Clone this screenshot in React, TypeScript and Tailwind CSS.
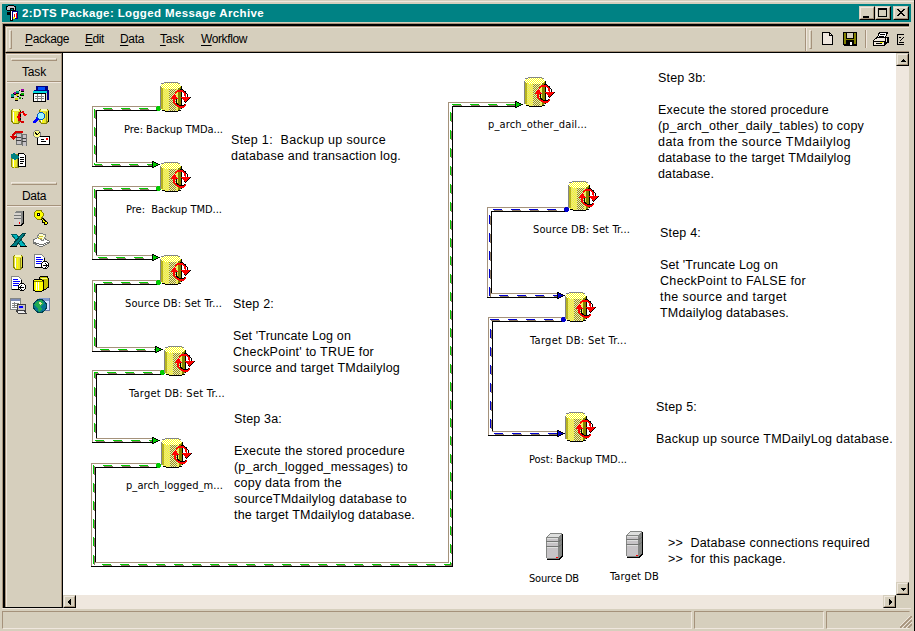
import { useLayoutEffect, useRef, type ReactNode } from "react";

const SHADOW = "#a5927b";

/** Single line of text whose tracking is adjusted to fill a given width. */
function Fit({ w, className = "", children }: { w: number; className?: string; children: ReactNode }) {
  const ref = useRef<HTMLSpanElement>(null);
  useLayoutEffect(() => {
    const el = ref.current;
    if (!el) return;
    el.style.letterSpacing = "0px";
    const natural = el.getBoundingClientRect().width;
    const n = (el.textContent ?? "").length;
    el.style.letterSpacing = `${(w - natural) / n}px`;
  }, [w]);
  return (
    <span ref={ref} className={`inline-block whitespace-pre ${className}`}>
      {children}
    </span>
  );
}

type Line = [string, number];
type Note = { x: number; y: number; lines: Line[] };

const notes: Note[] = [
  { x: 231, y: 139, lines: [["Step 1:  Backup up source", 155], ["database and transaction log.", 170]] },
  {
    x: 233, y: 303,
    lines: [["Step 2:", 41], ["", 0], ["Set 'Truncate Log on", 118], ["CheckPoint' to TRUE for", 141], ["source and target TMdailylog", 167]],
  },
  {
    x: 234, y: 418,
    lines: [["Step 3a:", 48], ["", 0], ["Execute the stored procedure", 171], ["(p_arch_logged_messages) to", 174], ["copy data from the", 108], ["sourceTMdailylog database to", 173], ["the target TMdailylog database.", 181]],
  },
  {
    x: 658, y: 77,
    lines: [["Step 3b:", 48], ["", 0], ["Execute the stored procedure", 171], ["(p_arch_other_daily_tables) to copy", 206], ["data from the source TMdailylog", 193], ["database to the target TMdailylog", 193], ["database.", 56]],
  },
  {
    x: 660, y: 232,
    lines: [["Step 4:", 41], ["", 0], ["Set 'Truncate Log on", 118], ["CheckPoint to FALSE for", 146], ["the source and target", 127], ["TMdailylog databases.", 129]],
  },
  { x: 656, y: 406, lines: [["Step 5:", 41], ["", 0], ["Backup up source TMDailyLog database.", 237]] },
  { x: 668, y: 542, lines: [[">>  Database connections required", 202], [">>  for this package.", 118]] },
];

const labels: [string, number, number, number][] = [
  ["Pre: Backup TMDa...", 124, 129, 99],
  ["Pre:  Backup TMD...", 126, 209, 96],
  ["Source DB: Set Tr...", 125, 303, 97],
  ["Target DB: Set Tr...", 129, 393, 96],
  ["p_arch_logged_m...", 126, 485, 97],
  ["p_arch_other_dail...", 488, 124, 99],
  ["Source DB: Set Tr...", 533, 229, 97],
  ["Target DB: Set Tr...", 530, 340, 97],
  ["Post: Backup TMD...", 529, 459, 98],
  ["Source DB", 529, 578, 50],
  ["Target DB", 610, 576, 49],
];

const cylinders: [number, number][] = [
  [160, 82], [160, 162], [160, 255], [164, 346], [161, 438], [524, 77], [568, 181], [565, 292], [565, 412],
];

function Cylinder({ x, y }: { x: number; y: number }) {
  return (
    <g transform={`translate(${x} ${y})`}>
      <path d="M1 4H21V27L17 29H5L1 27Z" fill="url(#body)" />
      <path d="M1 5H3V27H1Z" fill="#b5b221" />
      <path d="M9 6H16V29H9Z" fill="url(#mid)" />
      <path d="M18 5H21V27L18 28Z" fill="#848200" />
      <path d="M4 1H18L21 3V5L17 7H5L1 5V3Z" fill="url(#lid)" />
      <path d="M0 4H1V27H0ZM4 0H18V1H4ZM1 2H4V1H1ZM18 1H20V2H18Z" fill="#848684" />
      <path d="M21 4H22V27H21ZM5 29H18V30H5ZM2 28H5V29H2ZM18 28H21V29H18Z" fill="#000" />
      <g fill="none" stroke="#000">
        <path d="M14.5 12.5L17.5 8.5L22 7.5L25 9.5L27.5 13V15M16 17V20.5L19 23.5H23L26 22.5" />
      </g>
      <g fill="none" stroke="#ff0000" strokeWidth="1.6">
        <path d="M15 11.5L18 9H22L25 11.5L25.5 16M14 17V20L16.5 23.5L20 25H23L26 23" />
      </g>
      <path d="M20.5 15H30.5L25.5 20ZM10.5 17L14.5 12L18.5 17Z" fill="#ff0000" />
      <path d="M30.5 15.5L25.5 20.5L24 19" fill="none" stroke="#000" />
    </g>
  );
}

type Link = { x: number; y1: number; y2: number; start: number; end: number; color: string };

const links: Link[] = [
  { x: 92, y1: 108, y2: 164, start: 158, end: 160, color: "#00cb00" },
  { x: 92, y1: 188, y2: 257, start: 158, end: 160, color: "#00cb00" },
  { x: 92, y1: 282, y2: 349, start: 158, end: 163, color: "#00cb00" },
  { x: 92, y1: 372, y2: 440, start: 162, end: 160, color: "#00cb00" },
  { x: 487, y1: 209, y2: 295, start: 566, end: 565, color: "#0000ce" },
  { x: 488, y1: 319, y2: 433, start: 563, end: 565, color: "#0000ce" },
];

function Arrow({ x, y, color }: { x: number; y: number; color: string }) {
  return <path d={`M${x - 8} ${y - 3}L${x - 1} ${y + 0.5}L${x - 8} ${y + 4}Z`} fill={color} stroke="#000" />;
}

function Dashes({ d, color }: { d: string; color: string }) {
  return (
    <g strokeDasharray="9 9">
      <path d={d} stroke="#8c7963" transform="translate(1 1)" />
      <path d={d} stroke={color} />
    </g>
  );
}

function Elbow({ x, y1, y2, start, end, color }: Link) {
  return (
    <g fill="none">
      <path d={`M${start} ${y1 - 1.5}H${x + 0.5}V${y2 + 2}M${x + 4} ${y2 - 1.5}H${end - 8}`} stroke={SHADOW} />
      <path d={`M${start} ${y1 + 2.5}H${x + 4.5}V${y2 - 2}M${x} ${y2 + 2.5}H${end - 8}`} stroke="#000" />
      <Dashes d={`M${start - 10} ${y1 + 0.5}H${x + 2.5}V${y2 + 0.5}H${end - 7}`} color={color} />
      <path d={`M${start - 1} ${y1 - 2}h3v1h1v3h-1v1h-3v-1h-1v-3h1z`} fill={color} />
      <Arrow x={end} y={y2} color={color} />
    </g>
  );
}

function LongLink() {
  return (
    <g fill="none">
      <path d="M158 463.5H91.5V566M95 562.5H448.5V102.5H515" stroke={SHADOW} />
      <path d="M158 467.5H95.5V562M91 566.5H452.5V106.5H515" stroke="#000" />
      <Dashes d="M148 465.5H93.5V564.5H450.5V104.5H515" color="#00cb00" />
      <path d="M157 463h3v1h1v3h-1v1h-3v-1h-1v-3h1z" fill="#00cb00" />
      <Arrow x={523} y={104} color="#00cb00" />
    </g>
  );
}

function Server({ x, y }: { x: number; y: number }) {
  return (
    <g transform={`translate(${x} ${y})`}>
      <path d="M0 4L4 0H16V23L13 26H1L0 25Z" fill="#848684" />
      <path d="M1 4L4 1H15L13 4Z" fill="#dedfde" />
      <path d="M1 5H12V25H1Z" fill="#c6c3c6" />
      <path d="M1 5.5H12M1 9.5H12M1 14.5H12" stroke="#dedfde" />
      <path d="M0 8.5H13L16 6M0 13.5H13L16 11" stroke="#737573" fill="none" />
      <path d="M16.5 1V23L13 26.5H1" stroke="#000" fill="none" />
      <path d="M10 24h2v1h-2z" fill="#ff0000" />
    </g>
  );
}

function Diagram() {
  return (
    <svg className="absolute top-0 left-0" width="833" height="542" viewBox="63 53 833 542" shapeRendering="crispEdges">
      <defs>
        <pattern id="body" width="2" height="2" patternUnits="userSpaceOnUse">
          <path d="M0 0h2v2H0z" fill="#ffff21" />
          <path d="M0 0h1v1H0zM1 1h1v1H1z" fill="#dedb9c" />
        </pattern>
        <pattern id="mid" width="2" height="2" patternUnits="userSpaceOnUse">
          <path d="M0 0h2v2H0z" fill="#efebb5" />
          <path d="M0 0h1v1H0zM1 1h1v1H1z" fill="#949221" />
        </pattern>
        <pattern id="lid" width="2" height="2" patternUnits="userSpaceOnUse">
          <path d="M0 0h2v2H0z" fill="#fff" />
          <path d="M0 0h1v1H0zM1 1h1v1H1z" fill="#ffff18" />
        </pattern>
      </defs>
      {links.map((l) => <Elbow key={l.y1} {...l} />)}
      <LongLink />
      {cylinders.map(([x, y]) => <Cylinder key={`${x}-${y}`} x={x} y={y} />)}
      <Server x={546} y={533} />
      <Server x={626} y={531} />
    </svg>
  );
}

function Icon({ children }: { children: ReactNode }) {
  return (
    <svg width="17" height="16" viewBox="0 0 17 16" shapeRendering="crispEdges" className="block">
      {children}
    </svg>
  );
}

const drum = (
  <>
    <path d="M1.5 2.5L3 1H9L10.5 2.5V13L9 15H3L1.5 13Z" fill="#e7e331" stroke="#848200" />
    <path d="M3.5 4V14" stroke="#fff" />
    <path d="M5.5 4V15" stroke="#ffff00" />
    <path d="M8.5 4V15" stroke="#949221" />
    <path d="M10.5 3V14" stroke="#000" />
    <path d="M3 1H9V3H3Z" fill="#ffffb5" />
  </>
);
const sheet = (
  <>
    <path d="M1.5 0.5H8.5L11.5 3.5V13.5H1.5Z" fill="#fff" stroke="#848684" />
    <path d="M11.5 4V13.5H2" stroke="#000" fill="none" />
    <path d="M3 3.5H8M3 5.5H10M3 7.5H9M3 9.5H8" stroke="#0000ff" />
  </>
);

const taskIcons: ReactNode[] = [
  <>
    <path d="M1 9L5 7L8 11L12 8M6 7L11 3L14 5M10 11L14 13" stroke="#000" fill="none" strokeDasharray="1 1" />
    <path d="M1 8h3v3H1zM6 5h3v2H6z" fill="#009a84" />
    <path d="M4 6h2v2H4zM11 3h3v2h-3z" fill="#9c00a5" />
    <path d="M6 8h2v2H6zM5 12h3v2H5z" fill="#cece00" />
    <path d="M11 7h3v2h-3zM9 11h2v2H9z" fill="#00ad00" />
    <path d="M1 11h3v1H1zM6 7h3v1H6zM11 5h3v1h-3zM5 14h3v1H5zM11 9h3v1h-3zM4 8h2v1H4z" fill="#000" />
  </>,
  <>
    <path d="M3 0H15V4H16V14H14V6H1V4H3Z" fill="#000084" />
    <path d="M5 1H12V4H5Z" fill="#0051ff" />
    <path d="M0 5H14V7H0Z" fill="#00d7de" />
    <path d="M0.5 7.5H12.5V15.5H0.5Z" fill="#fff" stroke="#000" />
    <path d="M2 10H11M2 12.5H11M4 8V15M8 8V15" stroke="#848684" />
  </>,
  <>
    {drum}
    <path d="M8 9L10 5L13 4L15 7M9 10V12L12 14H14" stroke="#d60000" strokeWidth="1.6" fill="none" />
    <path d="M12 6H17L15 9ZM6 10H11L9 7Z" fill="#ff0000" />
  </>,
  <>
    <g transform="translate(5 0)">{drum}</g>
    <path d="M5 10L1 15" stroke="#0000ff" strokeWidth="3" />
    <circle cx="8" cy="8" r="3.5" fill="#9cf3ff" stroke="#0059c6" />
  </>,
  <>
    <path d="M6 3H11V14H6ZM12 4H16V16H12Z" fill="#c6c3c6" stroke="#737573" />
    <path d="M6 7H11M6 10H11M12 8H16M12 11H16" stroke="#424142" />
    <path d="M13 2H6L3 5V9" stroke="#d60000" strokeWidth="2" fill="none" />
    <path d="M0 6H7L3 10Z" fill="#d60000" />
  </>,
  <>
    <path d="M4.5 6.5H16.5V14.5H4.5Z" fill="#fff" stroke="#000" />
    <path d="M8 9.5H11M8 11.5H13" stroke="#000" />
    <path d="M13 8h2v2h-2z" fill="#ff0000" />
    <circle cx="4" cy="4" r="3.5" fill="#ffff84" stroke="#848684" />
    <path d="M2 2L4 5L7 2" stroke="#000" fill="none" />
  </>,
  <>
    <g transform="translate(0 2) scale(.9)">{drum}</g>
    <path d="M8.5 1.5H13.5L15.5 3.5V14.5H8.5Z" fill="#fff" stroke="#000" />
    <path d="M10 5.5H14M10 7.5H14M10 9.5H14M10 11.5H13" stroke="#000" />
    <path d="M1 2L4 1L9 4V6L5 8L1 6Z" fill="#008284" />
  </>,
];

const dataIcons: ReactNode[] = [
  <>
    <path d="M4 3L6 1H13V13L11 15H4Z" fill="#848684" />
    <path d="M4 3H11V15H4Z" fill="#d6d3ce" />
    <path d="M4 5.5H11M4 8.5H11" stroke="#737573" />
    <path d="M13.5 1V13L11 15.5H4" stroke="#000" fill="none" />
    <path d="M9 12h1v2H9z" fill="#ff0000" />
  </>,
  <>
    <path d="M8 7L15 13L13 15L11 14V12H9V10L6 8Z" fill="#ffff00" stroke="#000" />
    <path d="M2 2L4 0.5H8L10 3V6L8 9H4L1 6Z" fill="#ffff00" stroke="#848200" />
    <path d="M4 3h2v2H4z" fill="#fff" stroke="#000" />
  </>,
  <>
    <path d="M1 2H6L16 14H11Z" fill="#00b5bd" stroke="#006163" />
    <path d="M13 1H16L6 14H1Z" fill="#007d84" stroke="#004142" />
    <path d="M0 14.5H7M10 14.5H17" stroke="#000" />
  </>,
  <>
    <path d="M0.5 8L7 4L16 9V11L8 15L0.5 11Z" fill="#fff" stroke="#737573" />
    <path d="M4 5L7 1L13 3L10 9Z" fill="#ffffce" stroke="#848684" />
    <path d="M6 4H10M5 6H9" stroke="#cec329" />
    <path d="M1 10L8 13L16 10" stroke="#737573" fill="none" />
  </>,
  <g transform="translate(2 0)">{drum}</g>,
  <>
    {sheet}
    <circle cx="12" cy="11" r="3.5" fill="#fff" stroke="#000" />
    <path d="M10 11.5H14M12 9L14 11.5L12 14" stroke="#000" fill="none" />
  </>,
  <>
    {sheet}
    <circle cx="12" cy="11" r="3.5" fill="#fff" stroke="#000" />
    <path d="M10 11.5H14M12 9L10 11.5L12 14" stroke="#000" fill="none" />
  </>,
  <>
    <path d="M6.5 1.5L8 0.5H14L15.5 2.5V11L13 13H7Z" fill="#c6c300" stroke="#000" />
    <path d="M8 2H14" stroke="#ffff84" />
    <path d="M0.5 4.5L3 3H8L10.5 5V14L8 15.5H3L0.5 14Z" fill="#ffff00" stroke="#000" />
    <path d="M3 6V14M5 6V14" stroke="#fff" />
    <path d="M1 5.5H10" stroke="#848200" />
  </>,
  <>
    <path d="M0.5 0.5H10.5V11.5H0.5Z" fill="#fff" stroke="#848684" />
    <path d="M1 1H10V3H1Z" fill="#7b8ab5" />
    <path d="M2 5.5H9M2 7.5H7M2 9.5H7M4.5 4V10" stroke="#848684" />
    <path d="M7 6H15V12H7Z" fill="#c6c3c6" stroke="#424142" />
    <path d="M9 8H13V10H9Z" fill="#0000ff" />
    <path d="M6 12H14L16 15H8Z" fill="#efefef" stroke="#424142" />
  </>,
  <>
    <path d="M6 0H16V12H6Z" fill="#d6e3ff" stroke="#6b79a5" />
    <path d="M6 0H16V3H6Z" fill="#849ace" />
    <circle cx="7" cy="8" r="6.5" fill="#087594" stroke="#00414a" />
    <path d="M4 3L9 2L11 6L8 8L9 12L6 14L4 9L1 7Z" fill="#21aa52" />
    <path d="M6 4L9 5L7 7Z" fill="#e7e79c" />
  </>,
];

function Groove({ children }: { children?: ReactNode }) {
  return (
    <div>
      <div className="mx-1 h-[3px] border border-t-[#efe7de] border-r-[#a5927b] border-b-[#a5927b] border-l-[#efe7de]" />
      {children}
    </div>
  );
}

function Palette({ title, icons }: { title: string; icons: ReactNode[] }) {
  return (
    <Groove>
      <div className="flex h-5 items-center pt-[2px] pl-[15px]">
        <Fit w={24}>{title}</Fit>
      </div>
      <div className="h-[2px] border-t border-b border-t-[#a5927b] border-b-[#efe7de]" />
      <div className="grid grid-cols-[17px_17px] gap-x-[6px] gap-y-[6px] pt-[3px] pl-[3px]">
        {icons.map((icon, i) => <Icon key={i}>{icon}</Icon>)}
      </div>
    </Groove>
  );
}

function Raised({ className = "", children }: { className?: string; children: ReactNode }) {
  return (
    <div className={`border border-t-[#d6cfbd] border-r-black border-b-black border-l-[#d6cfbd] bg-[#d6cfbd] ${className}`}>
      <div className="flex size-full items-center justify-center border border-t-[#efe7de] border-r-[#a5927b] border-b-[#a5927b] border-l-[#efe7de]">
        {children}
      </div>
    </div>
  );
}

function Glyph({ d }: { d: string }) {
  return (
    <svg width="10" height="10" viewBox="0 0 10 10" shapeRendering="crispEdges" className="shrink-0">
      <path d={d} />
    </svg>
  );
}

const menus: [string, number, string][] = [
  ["Package", 44, "mr-4"],
  ["Edit", 19, "mr-4"],
  ["Data", 24, "mr-4"],
  ["Task", 24, "mr-[17px]"],
  ["Workflow", 46, ""],
];

function StatusCell({ className }: { className: string }) {
  return <div className={`border border-t-[#a5927b] border-r-[#efe7de] border-b-[#efe7de] border-l-[#a5927b] ${className}`} />;
}

export default function App() {
  return (
    <div className="flex h-[631px] w-[915px] flex-col overflow-hidden border-r border-r-black bg-[#d6cfbd] font-['Liberation_Sans',sans-serif] text-[12px] leading-none text-black">
      <div className="h-1 shrink-0 pt-px">
        <div className="h-px bg-[#efe7de]" />
      </div>
      <div className="mr-[3px] ml-[2px] flex h-[18px] shrink-0 items-center bg-[#008284] pl-1 text-white">
        <svg width="13" height="16" viewBox="0 0 13 16" shapeRendering="crispEdges">
          <path d="M0.5 2L3 0.5H7L9.5 2V5H7V3H4V5H1Z" fill="#c6c3c6" stroke="#000" />
          <path d="M4.5 5H6.5V15H4.5Z" fill="#fff" stroke="#000" />
          <path d="M1 7H4V10H1Z" fill="#000" />
          <path d="M6.5 6.5H11.5V13.5H6.5Z" fill="#fff" stroke="#000084" />
          <path d="M8.5 9V13M10.5 8V13" stroke="#ff0000" />
          <path d="M7 12H9V14H7Z" fill="#ffff00" />
        </svg>
        <Fit w={242} className="ml-[3px] pt-px text-[11.5px] font-bold">2:DTS Package: Logged Message Archive</Fit>
        <div className="mr-[2px] ml-auto flex">
          <Raised className="h-[14px] w-4"><Glyph d="M1 8h6v2H1z" /></Raised>
          <Raised className="h-[14px] w-4"><Glyph d="M0 0h9v9H0zM1 2v6h7V2z" /></Raised>
          <Raised className="ml-[2px] h-[14px] w-4"><Glyph d="M1 1h2v1h1v1h2V2h1V1h2v1H8v1H7v1H6v1h1v1h1v1h1v1H7V7H6V6H4v1H3v1H1V7h1V6h1V5h1V4H3V3H2V2H1z" /></Raised>
        </div>
      </div>
      <div className="mt-px mr-[5px] ml-[2px] flex h-[585px] shrink-0 flex-col border-t border-l border-t-[#a5927b] border-l-[#a5927b]">
        <div className="flex h-[584px] flex-col border-t-2 border-l-2 border-black">
          <div className="flex h-[27px] shrink-0 items-center border-t border-b border-l border-t-[#a5927b] border-b-black border-l-[#a5927b]">
            <div className="flex h-[25px] w-full items-center border-t border-b border-l border-t-[#efe7de] border-b-[#a5927b] border-l-[#efe7de]">
              <div className="ml-[2px] h-[19px] w-[3px] border border-t-[#efe7de] border-r-[#a5927b] border-b-[#a5927b] border-l-[#efe7de]" />
              <div className="mb-px ml-[13px] flex">
                {menus.map(([name, w, gap]) => (
                  <Fit key={name} w={w} className={gap}>
                    <span className="underline underline-offset-2">{name[0]}</span>{name.slice(1)}
                  </Fit>
                ))}
              </div>
              <div className="ml-auto h-full w-[2px] border-l border-r border-l-[#a5927b] border-r-[#efe7de]" />
              <div className="ml-[2px] h-[19px] w-[3px] border border-t-[#efe7de] border-r-[#a5927b] border-b-[#a5927b] border-l-[#efe7de]" />
              <svg className="mb-px ml-[9px]" width="88" height="18" viewBox="821 30 88 18" shapeRendering="crispEdges">
                <path d="M822.5 32.5H829.5L832.5 35.5V44.5H822.5Z" fill="#efe7de" stroke="#000" />
                <path d="M829.5 32V35.5H833" stroke="#000" fill="none" />
                <path d="M843 32H857V46H844L843 45Z" fill="#000" />
                <path d="M844 33H846V44H844ZM854 33H856V44H854ZM846 39H854V40H846Z" fill="#848200" />
                <path d="M847 33H853V38H847Z" fill="#d6cfbd" />
                <path d="M850 42H852V45H850Z" fill="#fff" />
                <path d="M865.5 30V48" stroke={SHADOW} />
                <path d="M866.5 30V48" stroke="#efe7de" />
                <path d="M877.5 37L879.5 32.5H887.5L885.5 37" fill="#fff" stroke="#000" />
                <path d="M873.5 40.5L877 37.5H887.5V42L884 45.5H873.5Z" fill="#efe7de" stroke="#000" />
                <path d="M880 34.5H885M879 36.5H884M874 41.5H884V45M876 43.5H882M888 37V43M885 38V44" stroke="#000" fill="none" />
                <path d="M880 42H883V43H880Z" fill="#ffff00" />
                <path d="M904 34.5H897.5V44.5H904M899 37.5H901M899 42.5H904M900 41L904 37" stroke="#000" fill="none" />
              </svg>
            </div>
          </div>
          <div className="flex h-[555px]">
            <div className="flex w-[58px] shrink-0 flex-col border-r border-b border-black">
              <div className="flex h-full flex-col border-t border-r border-l border-t-[#a5927b] border-r-[#a5927b] border-l-[#a5927b]">
                <div className="h-full border-t border-l border-[#efe7de] pt-[3px]">
                  <div className="h-[124px]"><Palette title="Task" icons={taskIcons} /></div>
                  <Palette title="Data" icons={dataIcons} />
                </div>
              </div>
            </div>
            <div className="flex flex-1 flex-col">
              <div className="flex h-[542px]">
                <div className="relative w-[833px] overflow-hidden bg-white">
                  <Diagram />
                  <div className="absolute -top-[52px] -left-[63px]">
                    {notes.map((n) => (
                      <div key={`${n.x}-${n.y}`} className="absolute text-[12.5px] leading-4" style={{ left: n.x, top: n.y - 8 }}>
                        {n.lines.map(([t, w], i) => (
                          <div key={i} className="h-4">{t && <Fit w={w}>{t}</Fit>}</div>
                        ))}
                      </div>
                    ))}
                    {labels.map(([t, x, y, w]) => (
                      <div key={`${x}-${y}`} className="absolute font-['DejaVu_Sans_Condensed','DejaVu_Sans',sans-serif] text-[11px] leading-[14px]" style={{ left: x, top: y - 7 }}>
                        <Fit w={w}>{t}</Fit>
                      </div>
                    ))}
                  </div>
                </div>
                <div className="flex w-[13px] flex-col justify-between bg-[#efe7de]">
                  <Raised className="h-[13px] w-[13px]"><Glyph d="M5 4h1v1h1v1h1v1H3V6h1V5h1z" /></Raised>
                  <Raised className="h-[13px] w-[13px]"><Glyph d="M3 4h5v1H7v1H6v1H5V6H4V5H3z" /></Raised>
                </div>
              </div>
              <div className="flex h-[13px]">
                <div className="flex w-[833px] justify-between bg-[#efe7de]">
                  <Raised className="h-[13px] w-[13px]"><Glyph d="M6 2v6H5V7H4V6H3V4h1V3h1V2z" /></Raised>
                  <Raised className="h-[13px] w-[13px]"><Glyph d="M4 2v6h1V7h1V6h1V4H6V3H5V2z" /></Raised>
                </div>
              </div>
            </div>
          </div>
        </div>
      </div>
      <div className="mr-[3px] ml-[2px] h-px shrink-0 bg-[#efe7de]" />
      <div className="flex h-[21px] pt-[2px] pl-[2px]">
        <StatusCell className="h-[18px] w-[690px]" />
        <StatusCell className="ml-[2px] h-[18px] w-[130px]" />
        <StatusCell className="ml-[2px] h-[18px] w-[84px] border-r-transparent" />
        <svg className="-ml-[10px] mt-[5px]" width="12" height="12" viewBox="0 0 12 12">
          <path d="M0 12L12 0M4 12L12 4M8 12L12 8" stroke={SHADOW} strokeWidth="1.7" />
          <path d="M-2 12L12 -2M2 12L12 2M6 12L12 6" stroke="#efe7de" />
        </svg>
      </div>
    </div>
  );
}
